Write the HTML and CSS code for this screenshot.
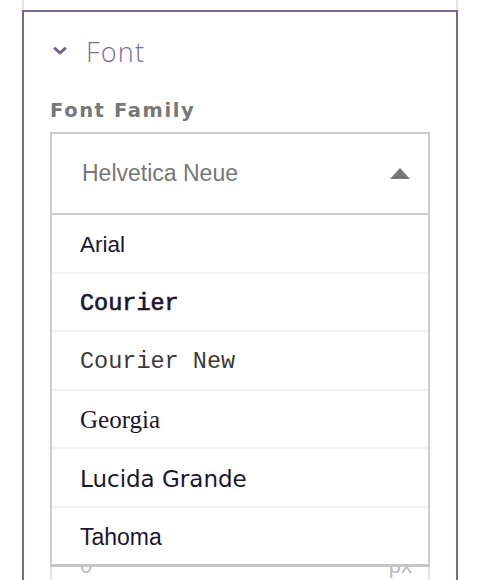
FILE: index.html
```html
<!DOCTYPE html>
<html lang="en">
<head>
  <meta charset="UTF-8">
  <title>Font settings</title>
  <meta name="viewport" content="width=device-width, initial-scale=1.0">
  <link rel="stylesheet" href="styles.css">
</head>
<body>

  <div class="panel-stub"></div>

  <section class="panel">
    <div class="panel-head">
      <svg class="chevron" width="14" height="10" viewBox="0 0 14 10">
        <path d="M2 2.5 L7 7 L12 2.5" fill="none" stroke="#6f628b" stroke-width="3" stroke-linecap="round" stroke-linejoin="round"/>
      </svg>
      <span class="panel-title">Font</span>
    </div>

    <div class="field">
      <label class="field-label">Font Family</label>
      <div class="select">
        <div class="select-value">
          <span>Helvetica Neue</span>
          <span class="caret"></span>
        </div>
        <ul class="select-list">
          <li class="opt opt-arial">Arial</li>
          <li class="opt opt-courier">Courier</li>
          <li class="opt opt-courier-new">Courier New</li>
          <li class="opt opt-georgia">Georgia</li>
          <li class="opt opt-lucida">Lucida Grande</li>
          <li class="opt opt-tahoma">Tahoma</li>
        </ul>
      </div>
    </div>

    <div class="field field-size">
      <div class="input-px">
        <span>0</span>
        <span>px</span>
      </div>
    </div>
  </section>

</body>
</html>
```

FILE: styles.css
```css
* {
  box-sizing: border-box;
}

body {
  margin: 0;
  background: #fff;
  font-family: "Liberation Sans", Arial, sans-serif;
  overflow: hidden;
}

.panel-stub {
  margin: 0 22px;
  height: 10px;
  border-left: 2px solid #e6e6e6;
  border-right: 2px solid #e6e6e6;
}

.panel {
  margin: 0 22px;
  border: 2px solid #766a91;
  border-bottom: none;
  padding: 0 26px;
  height: 570px;
}

.panel-head {
  display: flex;
  align-items: center;
  height: 78px;
  padding-left: 3px;
}

.chevron {
  margin-right: 19px;
}

.panel-title {
  font-family: "Open Sans", Lato, sans-serif;
  font-weight: 300;
  font-size: 27px;
  letter-spacing: 1.2px;
  color: #7a6e96;
}

.field-label {
  display: block;
  font-family: "DejaVu Sans", sans-serif;
  font-weight: 700;
  font-size: 19.5px;
  letter-spacing: 1.6px;
  color: #777;
  line-height: 42px;
}

.select {
  position: relative;
}

.select-value {
  display: flex;
  align-items: center;
  justify-content: space-between;
  height: 83px;
  padding: 0 18px 0 30px;
  border: 2px solid #cdcdcd;
  font-family: "Liberation Sans", Arial, sans-serif;
  font-size: 23px;
  color: #777;
}

.caret {
  width: 0;
  height: 0;
  border-left: 10px solid transparent;
  border-right: 10px solid transparent;
  border-bottom: 11px solid #777;
}

.select-list {
  position: absolute;
  top: 83px;
  left: 0;
  right: 0;
  margin: 0;
  padding: 0;
  list-style: none;
  background: #fff;
  border: 2px solid #cdcdcd;
  border-top: none;
  border-bottom: 3px solid #c6c6c6;
  z-index: 2;
}

.opt {
  display: flex;
  align-items: center;
  height: 58.5px;
  padding: 3px 0 0 28px;
  border-bottom: 2px solid #f3f3f3;
  font-size: 22.5px;
  color: #1b1631;
}

.opt:last-child {
  border-bottom: none;
  height: 56.5px;
}

.opt-arial {
  font-family: "Liberation Sans", Arial, sans-serif;
}

.opt-courier {
  font-family: "Liberation Mono", "Courier New", monospace;
  font-size: 23.5px;
  -webkit-text-stroke: 0.7px #1b1631;
}

.opt-courier-new {
  font-family: "Liberation Mono", "Courier New", monospace;
  font-size: 23.5px;
  color: #3a3a3a;
}

.opt-georgia {
  font-family: "Liberation Serif", Georgia, serif;
  font-size: 25px;
}

.opt-lucida {
  font-family: "DejaVu Sans", sans-serif;
  font-size: 23px;
}

.opt-tahoma {
  font-family: "Liberation Sans", Tahoma, sans-serif;
  font-size: 23px;
}

.field-size {
  margin-top: 325px;
}

.input-px {
  display: flex;
  align-items: center;
  justify-content: space-between;
  height: 52px;
  padding: 0 16px 0 28px;
  border: 2px solid #e3e3e3;
  font-size: 22px;
  color: #bbb;
}
```
